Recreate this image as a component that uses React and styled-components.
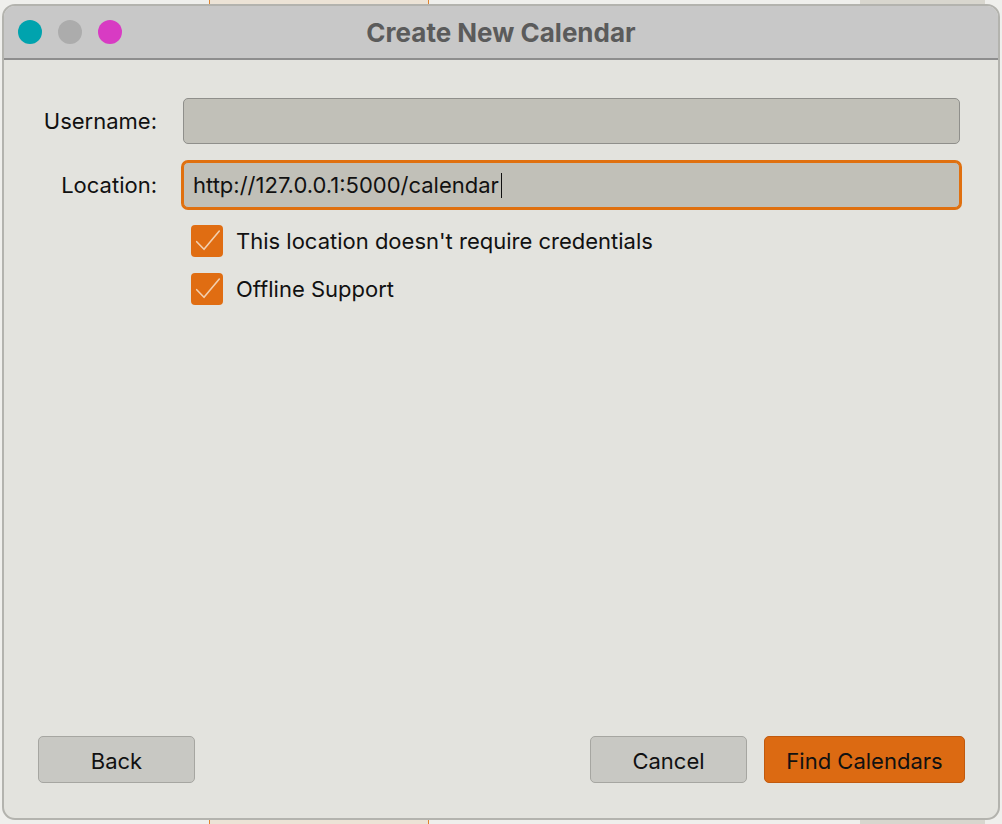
import React from "react";
import styled, { createGlobalStyle } from "styled-components";

const Global = createGlobalStyle`
  html, body { margin: 0; padding: 0; }
  body {
    background: #efefec;
    width: 1002px;
    height: 824px;
    overflow: hidden;
    font-family: Inter, "Liberation Sans", sans-serif;
  }
`;

const Desktop = styled.div`
  position: relative;
  width: 1002px;
  height: 824px;
  padding: 4px 2px 4px 2px;
  box-sizing: border-box;
`;

const BehindPanel = styled.div`
  position: absolute;
  top: 0;
  bottom: 0;
  left: ${(p) => p.$left}px;
  width: ${(p) => p.$width}px;
  background: ${(p) => p.$bg};
  border-left: ${(p) => (p.$edge ? `1px solid ${p.$edge}` : "none")};
  border-right: ${(p) => (p.$edge ? `1px solid ${p.$edge}` : "none")};
`;

const Window = styled.div`
  position: relative;
  width: 998px;
  height: 816px;
  box-sizing: border-box;
  border: 2px solid #b3b3ae;
  border-radius: 13px;
  background: #e3e3de;
  display: flex;
  flex-direction: column;
  overflow: hidden;
`;

const TitleBar = styled.div`
  height: 52px;
  flex: none;
  background: #c8c8c8;
  border-bottom: 2px solid #8e8e8e;
  display: flex;
  align-items: center;
  position: relative;
  padding-left: 14px;
`;

const Lights = styled.div`
  display: flex;
  gap: 16px;
`;

const Light = styled.span`
  width: 24px;
  height: 24px;
  border-radius: 50%;
  background: ${(p) => p.$color};
`;

const Title = styled.div`
  position: absolute;
  left: 0;
  right: 0;
  text-align: center;
  font-size: 26px;
  font-weight: 700;
  color: #5b5b5b;
  pointer-events: none;
`;

const Content = styled.div`
  flex: 1;
  display: flex;
  flex-direction: column;
  justify-content: space-between;
  padding: 38px 33px 35px 34px;
`;

const Form = styled.div`
  display: grid;
  grid-template-columns: 119px 1fr;
  column-gap: 26px;
  row-gap: 18px;
  align-items: center;
  padding-right: 5px;
`;

const Label = styled.label`
  justify-self: end;
  font-size: 22px;
  color: #111;
`;

const Input = styled.div`
  height: 46px;
  box-sizing: border-box;
  background: #c1c0b8;
  border: 1.5px solid ${(p) => (p.$focused ? "#e0700f" : "#8f8f8b")};
  box-shadow: ${(p) => (p.$focused ? "0 0 0 2px #e0700f" : "none")};
  border-radius: 5px;
  display: flex;
  align-items: center;
  padding-left: 9px;
  font-size: 22px;
  color: #111;
`;

const Caret = styled.span`
  display: inline-block;
  width: 1.5px;
  height: 25px;
  background: #111;
  margin-left: 2px;
`;

const Checks = styled.div`
  grid-column: 2;
  display: flex;
  flex-direction: column;
  gap: 16px;
  padding-left: 8px;
  margin-top: -1px;
`;

const CheckRow = styled.div`
  display: flex;
  align-items: center;
  gap: 13px;
  font-size: 22px;
  color: #111;
`;

const Box = styled.span`
  width: 32px;
  height: 32px;
  border-radius: 4px;
  background: #e06d12;
  display: flex;
  align-items: center;
  justify-content: center;
`;

const Footer = styled.div`
  display: flex;
  align-items: center;
  gap: 17px;
`;

const Spacer = styled.div`
  flex: 1;
`;

const Button = styled.button`
  height: 47px;
  width: ${(p) => p.$w}px;
  box-sizing: border-box;
  border-radius: 5px;
  border: 1.5px solid ${(p) => (p.$primary ? "#c15a0e" : "#a6a6a1")};
  background: ${(p) => (p.$primary ? "#dc6a12" : "#c8c8c3")};
  font-family: Inter, "Liberation Sans", sans-serif;
  font-size: 22px;
  color: #111;
  padding: 2px 0 0;
`;

const Check = () => (
  <svg width="32" height="32" viewBox="0 0 32 32">
    <path d="M5.7 16.7 L13 24.3 L28.3 6" fill="none" stroke="#f2cfae" strokeWidth="1.6" strokeLinecap="round" strokeLinejoin="round" />
  </svg>
);

export default function App() {
  return (
    <>
      <Global />
      <Desktop>
        <BehindPanel $left={209} $width={218} $bg="#ece3d6" $edge="#e0842e" />
        <BehindPanel $left={860} $width={125} $bg="#d8d6ce" />
        <Window>
          <TitleBar>
            <Lights>
              <Light $color="#00a3ae" />
              <Light $color="#acacac" />
              <Light $color="#d83bc3" />
            </Lights>
            <Title>Create New Calendar</Title>
          </TitleBar>
          <Content>
            <Form>
              <Label>Username:</Label>
              <Input />
              <Label>Location:</Label>
              <Input $focused>
                http://127.0.0.1:5000/calendar
                <Caret />
              </Input>
              <Checks>
                <CheckRow>
                  <Box><Check /></Box>
                  This location doesn't require credentials
                </CheckRow>
                <CheckRow>
                  <Box><Check /></Box>
                  Offline Support
                </CheckRow>
              </Checks>
            </Form>
            <Footer>
              <Button $w={157}>Back</Button>
              <Spacer />
              <Button $w={157}>Cancel</Button>
              <Button $w={201} $primary>Find Calendars</Button>
            </Footer>
          </Content>
        </Window>
      </Desktop>
    </>
  );
}
